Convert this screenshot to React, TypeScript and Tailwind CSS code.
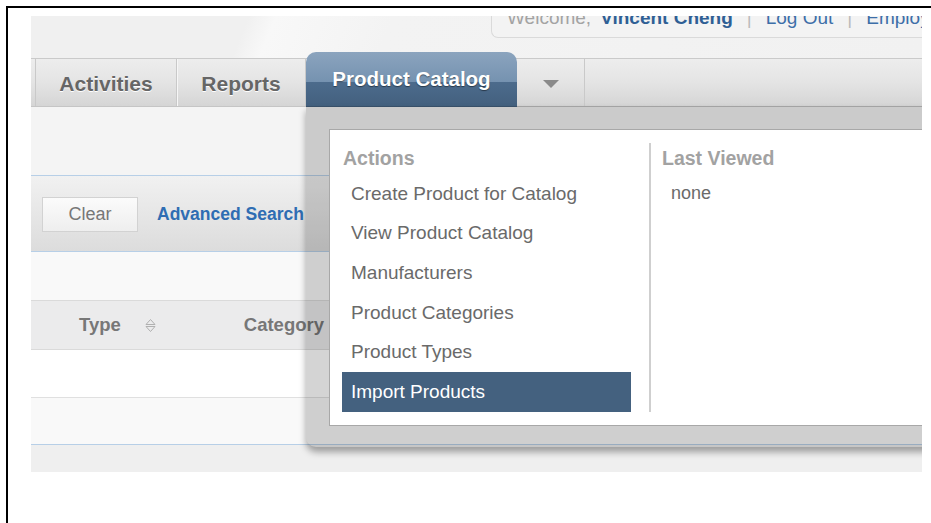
import React from "react";

const actions = [
  "Create Product for Catalog",
  "View Product Catalog",
  "Manufacturers",
  "Product Categories",
  "Product Types",
  "Import Products",
];

const SortIcon = () => (
  <svg width="11" height="15" viewBox="0 0 11 15" fill="none" stroke="#b0b0b0" strokeWidth="1">
    <path d="M1 6.5 L5.5 1.5 L10 6.5 Z" />
    <path d="M1 8.5 L10 8.5 L5.5 13.5 Z" />
  </svg>
);

const NavTab = ({ label, width }: { label: string; width: string }) => (
  <div
    className={`${width} flex items-center justify-center pt-[2px] border-r border-[#c9c9c9] shadow-[1px_0_0_#f6f6f6] text-[21px] font-bold text-[#666] [text-shadow:0_1px_0_#fff]`}
  >
    {label}
  </div>
);

const CatalogMenu = () => (
  <div className="absolute left-[275px] top-[90px] w-[640px] h-[341px] bg-black/[0.17] rounded-bl-[10px] shadow-[0_5px_7px_rgba(0,0,0,0.35)] pl-[23px] pt-[23px]">
    <div className="flex h-[297px] bg-white border border-[#a8a8a8] pt-[13px]">
      <div className="w-[319px] pl-[12px] pr-[18px]">
        <div className="h-[31px] flex items-center pl-px text-[19.5px] font-bold text-[#a2a2a2]">
          Actions
        </div>
        {actions.map((item) => {
          const active = item === "Import Products";
          return (
            <div
              key={item}
              className={
                active
                  ? "h-[39.7px] flex items-center pl-[9px] text-[19px] bg-[#44617f] text-white"
                  : "h-[39.7px] flex items-center pl-[9px] text-[19px] text-[#6a6a6a]"
              }
            >
              {item}
            </div>
          );
        })}
      </div>
      <div className="w-[2px] h-[269px] bg-[#cfcfcf]" />
      <div className="flex-1 pl-[11px]">
        <div className="h-[31px] flex items-center text-[19.5px] font-bold text-[#a2a2a2]">
          Last Viewed
        </div>
        <div className="h-[39.7px] flex items-center pl-[9px] text-[18px] text-[#6a6a6a]">
          none
        </div>
      </div>
    </div>
  </div>
);

const Screen = () => (
  <div className="relative w-[891px] h-[456px] overflow-hidden bg-[#efefef] font-['Liberation_Sans',Arial,sans-serif]">
    {/* header strip with the account links */}
    <div className="h-[42px] bg-[linear-gradient(112deg,#f0f0f0_0%,#f0f0f0_24%,#f8f8f8_27%,#f3f3f3_40%,#f1f1f1_100%)] flex justify-end">
      <div className="w-[431px] h-[22px] overflow-hidden bg-[#f3f3f3] border-l border-b border-[#dadada] rounded-bl-[7px] pl-[15px]">
        <div className="-mt-[9px] flex items-center whitespace-nowrap text-[19px] leading-[22px]">
          <span className="text-[#a3a3a3]">Welcome,</span>
          <span className="ml-[9px] font-bold text-[#2f5f95]">Vincent Cheng</span>
          <span className="mx-[14px] text-[#bbbbbb]">|</span>
          <span className="text-[#3d6ea8]">Log Out</span>
          <span className="mx-[14px] text-[#bbbbbb]">|</span>
          <span className="text-[#3d6ea8]">Employee</span>
        </div>
      </div>
    </div>

    {/* main navigation */}
    <div className="h-[48px] flex bg-[linear-gradient(#ededed,#e4e4e4_50%,#d5d5d5)] border-t border-[#cacaca]">
      <div className="w-[5px] border-r border-[#c9c9c9]" />
      <NavTab label="Activities" width="w-[141px]" />
      <NavTab label="Reports" width="w-[129px]" />
      <div className="relative -mt-[7px] h-[55px] w-[211px] rounded-t-[10px] overflow-hidden flex items-center justify-center text-[20.5px] font-bold text-white [text-shadow:0_1px_1px_rgba(0,0,0,0.45)] bg-[linear-gradient(#8ba4be,#7592b0_55%,#4c6b8c_55%,#43607e)]">
        Product Catalog
      </div>
      <div className="w-[68px] flex items-center justify-center pt-[3px] border-r border-[#c9c9c9]">
        <svg width="16" height="8" viewBox="0 0 16 8">
          <path d="M0 0 L16 0 L8 8 Z" fill="#8a8a8a" />
        </svg>
      </div>
    </div>

    <div className="h-[69px] bg-[#f4f4f4] border-t border-[#c5c5c5]" />

    {/* search bar */}
    <div className="h-[77px] border-y border-[#b7cfe7] bg-[linear-gradient(#f1f1f1,#dcdcdc)] flex items-center pl-[11px] pt-[1px]">
      <div className="w-[96px] h-[35px] flex items-center justify-center bg-[linear-gradient(#fbfbfb,#eeeeee)] border border-[#d2d2d2] text-[18px] text-[#777]">
        Clear
      </div>
      <div className="ml-[19px] text-[17.5px] font-bold text-[#2f6db3]">Advanced Search</div>
    </div>

    <div className="h-[48px] bg-[#f9f9f9]" />

    {/* results table */}
    <div className="h-[50px] flex items-center bg-[#ebebec] border-y border-[#dadada] text-[18.5px] font-bold text-[#777]">
      <span className="ml-[48px]">Type</span>
      <span className="ml-[24px] mt-[1px]">
        <SortIcon />
      </span>
      <span className="ml-[88px]">Category</span>
    </div>
    <div className="h-[48px] bg-white border-b border-[#e0e0e0]" />
    <div className="h-[47px] bg-[#f9f9f9] border-b border-[#b7cfe7]" />

    <CatalogMenu />
  </div>
);

export default function App() {
  return (
    <div className="w-[931px] h-[523px] bg-white overflow-hidden">
      <div className="ml-[6px] mt-[6px] h-[600px] border-t-2 border-l-2 border-black pl-[23px] pt-[8px]">
        <Screen />
      </div>
    </div>
  );
}
